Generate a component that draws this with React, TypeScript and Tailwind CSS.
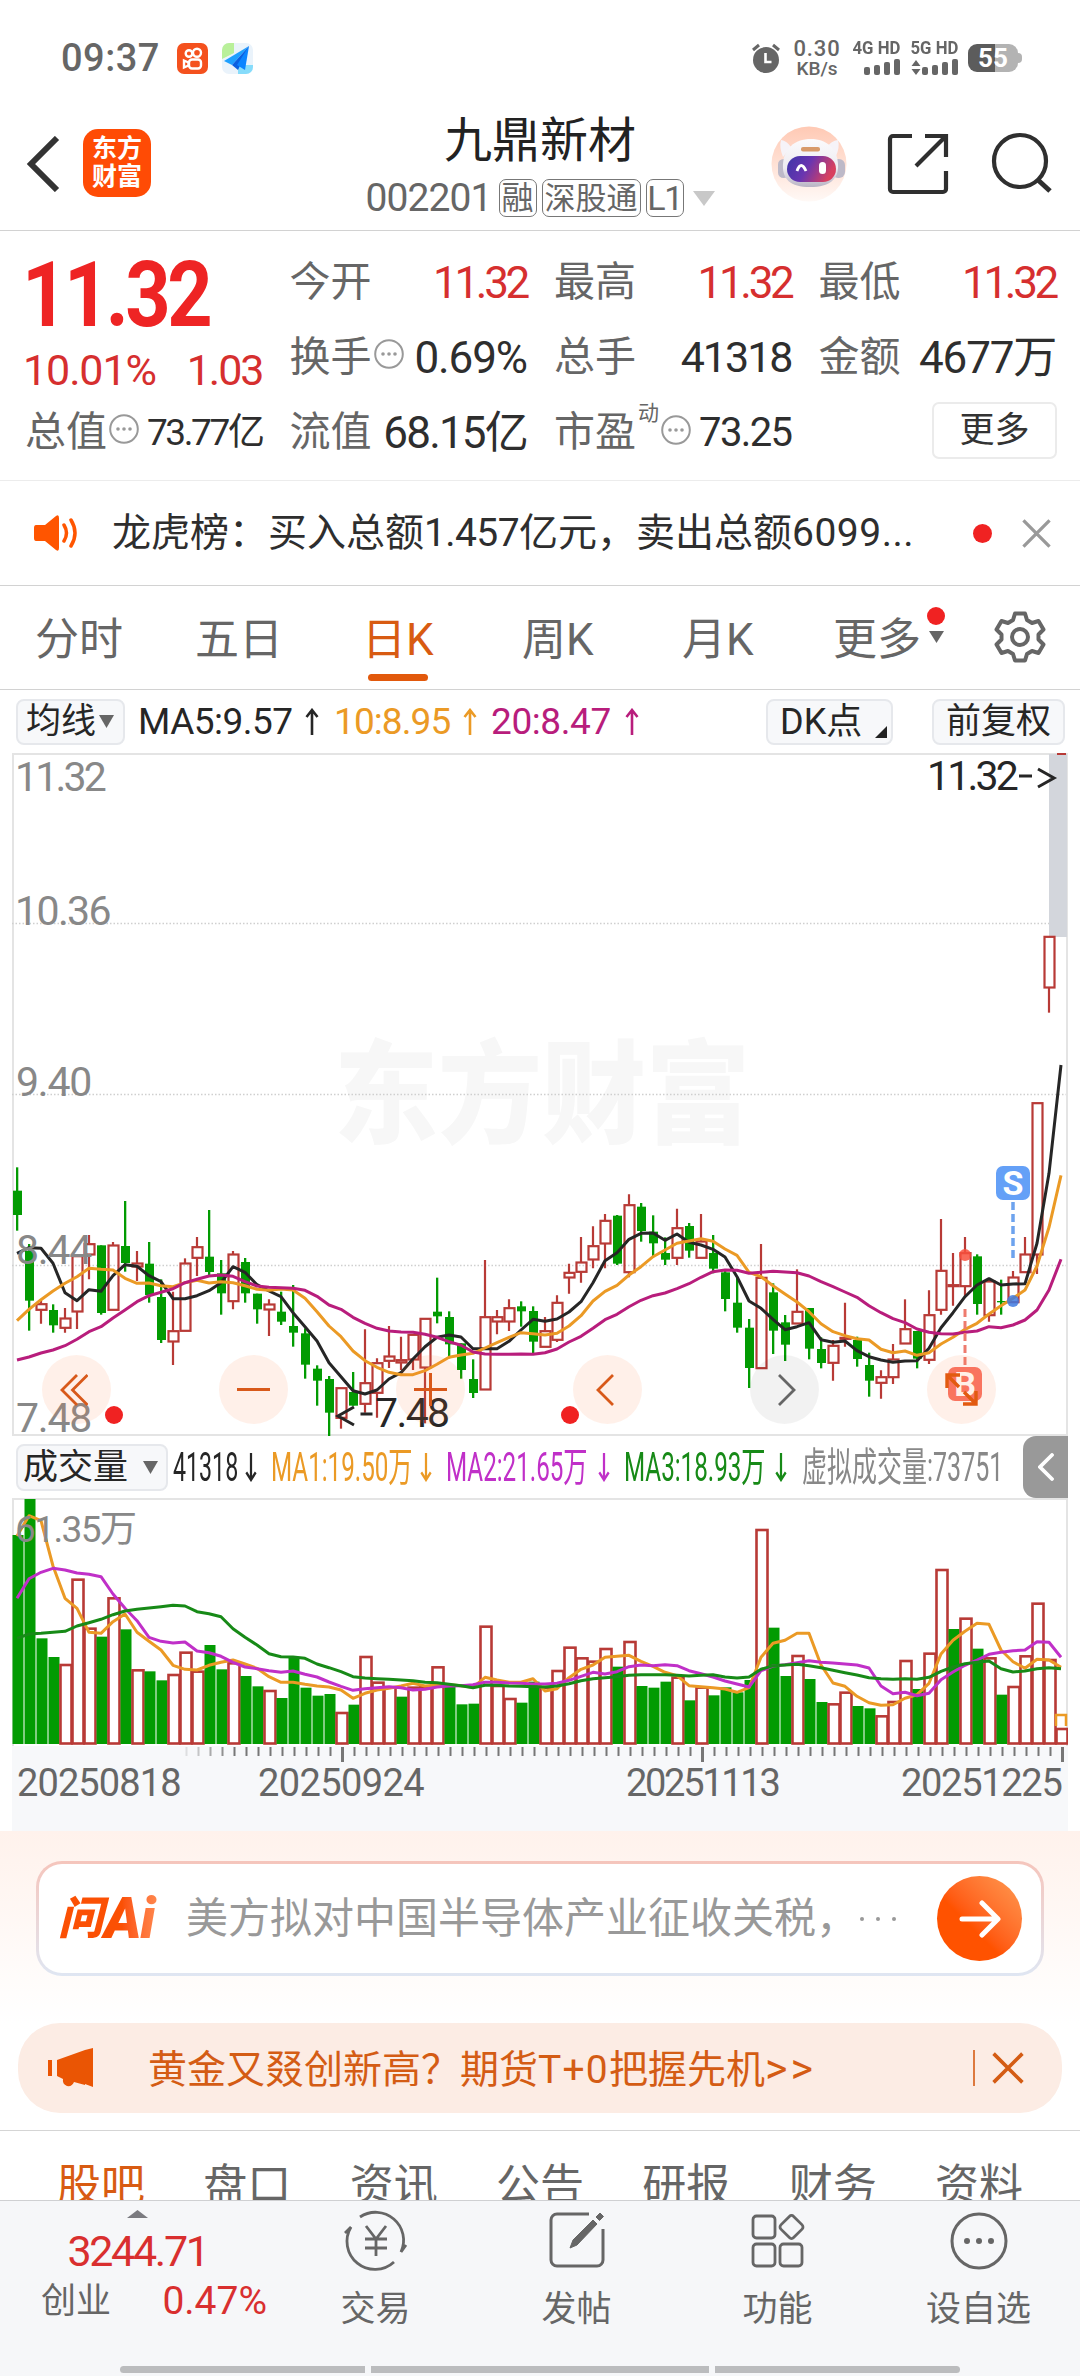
import React from "react";

/* ---------- chart data ---------- */
const STEP = 12;
const FIRST = 5;
const cx = (i: number) => FIRST + i * STEP;

type Candle = [up: 0 | 1, top: number, bottom: number, high: number, low: number];
const candles: Candle[] = [
  [0, 152, 225, 82, 272], [0, 333, 482, 312, 572], [1, 491, 511, 482, 551], [0, 510, 556, 493, 578],
  [1, 534, 565, 504, 578], [1, 347, 516, 347, 567], [1, 311, 345, 285, 418], [0, 316, 519, 316, 524],
  [1, 315, 511, 306, 511], [0, 318, 369, 183, 395], [1, 369, 381, 333, 423], [0, 371, 465, 306, 488],
  [0, 471, 600, 418, 609], [1, 572, 606, 455, 675], [1, 369, 574, 355, 574], [1, 320, 355, 291, 408],
  [0, 350, 396, 210, 410], [0, 400, 460, 360, 524], [1, 342, 485, 333, 508], [0, 366, 460, 354, 488],
  [0, 461, 508, 461, 551], [1, 492, 510, 478, 588], [0, 515, 545, 455, 555], [0, 558, 578, 435, 620],
  [0, 580, 674, 565, 716], [0, 686, 722, 676, 797], [0, 717, 818, 708, 888], [1, 743, 835, 743, 866],
  [0, 756, 797, 696, 797], [1, 728, 793, 568, 818], [1, 668, 760, 655, 833], [1, 648, 664, 558, 684],
  [1, 659, 669, 590, 690], [1, 583, 660, 583, 690], [1, 535, 684, 535, 850], [0, 515, 529, 413, 550],
  [0, 531, 613, 514, 655], [0, 610, 690, 610, 716], [0, 717, 759, 658, 774], [1, 530, 750, 360, 750],
  [1, 530, 546, 510, 583], [1, 503, 546, 478, 573], [0, 499, 514, 484, 560], [0, 513, 605, 499, 643],
  [1, 572, 622, 531, 622], [1, 487, 601, 466, 606], [1, 397, 414, 371, 461], [1, 366, 397, 291, 428],
  [1, 317, 360, 259, 385], [1, 241, 312, 222, 385], [0, 227, 371, 225, 375], [1, 194, 398, 163, 412],
  [0, 200, 273, 189, 305], [0, 275, 310, 226, 350], [0, 339, 359, 292, 375], [1, 263, 355, 206, 375],
  [0, 258, 332, 249, 353], [1, 303, 355, 222, 355], [0, 339, 386, 285, 400], [0, 397, 477, 390, 514],
  [0, 488, 563, 412, 578], [0, 563, 684, 537, 744], [1, 412, 686, 312, 686], [0, 457, 572, 430, 642],
  [0, 547, 614, 525, 663], [1, 514, 552, 388, 552], [0, 504, 626, 504, 658], [0, 627, 669, 592, 685],
  [1, 616, 670, 600, 722], [1, 592, 598, 488, 620], [0, 600, 657, 590, 680], [0, 675, 722, 638, 770],
  [1, 710, 730, 691, 776], [1, 657, 713, 612, 732], [1, 566, 612, 478, 612], [0, 573, 656, 573, 685],
  [1, 524, 661, 451, 672], [1, 391, 511, 237, 524], [1, 434, 440, 339, 497], [1, 338, 440, 291, 470],
  [0, 349, 492, 343, 524], [1, 423, 527, 415, 545], [0, 483, 487, 419, 524], [1, 411, 488, 393, 488],
  [1, 342, 398, 291, 398], [1, -112, 345, -112, 402], [1, -611, -456, -611, -382],
];

const ma5 = [340, 323, 325, 370, 458, 482, 449, 454, 407, 374, 379, 407, 425, 476, 476, 467, 452, 428, 380, 397, 434, 453, 470, 518, 560, 603, 668, 710, 752, 762, 750, 717, 698, 657, 620, 592, 585, 591, 626, 626, 626, 604, 570, 538, 544, 537, 516, 485, 428, 362, 338, 298, 280, 279, 301, 282, 307, 315, 328, 351, 410, 483, 505, 538, 569, 560, 548, 599, 607, 603, 632, 650, 660, 667, 663, 662, 625, 563, 518, 470, 435, 416, 435, 432, 431, 310, 100, -225];
const ma10 = [542, 508, 479, 453, 430, 410, 385, 388, 390, 415, 430, 429, 437, 440, 428, 421, 429, 425, 428, 437, 448, 451, 447, 450, 475, 515, 558, 590, 633, 662, 682, 697, 704, 704, 692, 673, 652, 645, 640, 624, 608, 592, 578, 581, 585, 580, 558, 527, 483, 454, 436, 405, 380, 350, 330, 310, 303, 296, 304, 327, 346, 397, 410, 437, 462, 486, 515, 551, 575, 587, 596, 600, 628, 638, 633, 646, 638, 612, 592, 568, 550, 522, 497, 475, 450, 378, 262, 106];
const ma20 = [660, 651, 639, 630, 617, 598, 575, 560, 534, 510, 485, 467, 457, 446, 428, 418, 408, 405, 409, 425, 438, 442, 443, 445, 451, 469, 495, 508, 532, 550, 565, 573, 576, 577, 583, 592, 605, 616, 636, 642, 643, 643, 642, 643, 638, 627, 606, 589, 565, 539, 523, 500, 481, 467, 459, 446, 431, 412, 395, 390, 391, 400, 397, 394, 396, 398, 408, 425, 440, 456, 472, 497, 518, 536, 548, 567, 577, 581, 582, 577, 573, 560, 563, 555, 540, 510, 450, 358];

/* Positive entries are rising bars, negative ones falling bars. */
const volumes = [-315, -207, -625, -681, 702, 446, 593, -620, 502, -598, 718, -724, -751, 732, 665, 722, -645, -718, 697, -738, -769, 780, -804, -682, -773, -797, -792, 846, -824, 678, 755, 770, -800, 770, 768, 709, -770, -823, -821, 587, 765, 804, -818, -755, 770, 720, 650, 682, 692, 654, -710, 633, -768, -773, -755, 740, -811, 770, -796, -772, -787, -750, 297, -593, -738, 675, -747, -816, 820, 785, -828, -835, 856, 813, 690, -777, 668, 417, -597, 563, -656, 682, -794, 768, 676, 518, 687, 894];
const vma1 = [318, 257, 272, 408, 505, 535, 607, 610, 575, 552, 607, 634, 660, 706, 718, 720, 706, 697, 690, 702, 715, 740, 757, 757, 763, 768, 771, 780, 805, 790, 780, 775, 768, 760, 768, 765, 764, 767, 772, 742, 750, 757, 757, 746, 783, 776, 743, 718, 705, 682, 679, 676, 694, 709, 727, 737, 767, 770, 773, 777, 787, 773, 682, 640, 631, 610, 610, 705, 759, 769, 799, 818, 826, 824, 805, 794, 760, 672, 631, 604, 580, 583, 660, 695, 715, 688, 690, 712];
const vma2 = [505, 446, 427, 415, 420, 429, 433, 440, 492, 535, 572, 622, 634, 639, 636, 663, 668, 679, 697, 711, 716, 722, 727, 723, 733, 741, 756, 769, 781, 776, 773, 770, 773, 780, 778, 771, 768, 767, 764, 757, 757, 759, 760, 762, 762, 760, 751, 739, 727, 732, 725, 710, 705, 707, 704, 707, 722, 731, 741, 753, 762, 771, 722, 708, 704, 698, 692, 697, 699, 702, 705, 714, 768, 791, 787, 797, 790, 749, 726, 706, 690, 673, 667, 662, 660, 635, 637, 682];
const vma3 = [625, 612, 610, 607, 604, 588, 578, 568, 554, 543, 538, 534, 530, 526, 528, 545, 551, 560, 596, 622, 645, 671, 680, 681, 685, 702, 713, 725, 740, 744, 746, 748, 750, 752, 757, 758, 763, 767, 773, 766, 766, 768, 769, 770, 771, 768, 761, 752, 746, 743, 740, 736, 734, 734, 734, 736, 738, 736, 734, 741, 744, 741, 718, 707, 705, 703, 707, 713, 721, 728, 735, 743, 746, 748, 746, 748, 742, 724, 711, 701, 697, 693, 716, 726, 723, 716, 713, 716];

const RED = "#b83a36";
const GREEN = "#029b02";

const py = (v: number) => 387 + v / 3;
const vy = (v: number) => v / 3 - 68;
const path = (vals: number[], y: (v: number) => number) =>
  vals.map((v, i) => `${cx(i)},${y(v).toFixed(1)}`).join(" ");

/* ---------- small icons ---------- */
const Dots = () => (
  <svg className="size-[30px] shrink-0" viewBox="0 0 30 30" fill="none">
    <circle cx="15" cy="15" r="13.8" stroke="#999" strokeWidth="2" />
    <circle cx="9" cy="15" r="1.8" fill="#999" />
    <circle cx="15" cy="15" r="1.8" fill="#999" />
    <circle cx="21" cy="15" r="1.8" fill="#999" />
  </svg>
);

const Arrow = ({ down = false }: { down?: boolean }) => (
  <svg className={down ? "h-[29px] w-[12px] shrink-0 rotate-180" : "h-[27px] w-[14px] shrink-0"} viewBox="0 0 14 27" preserveAspectRatio="none" fill="none" stroke="currentColor" strokeWidth="2.600">
    <path d="M7 27V2M1.5 9L7 2l5.5 7" />
  </svg>
);

const Cross = ({ className }: { className: string }) => (
  <svg className={className} viewBox="0 0 30 30" fill="none" stroke="currentColor" strokeWidth="3.400">
    <path d="M1.5 1.5l27 27M28.5 1.5l-27 27" />
  </svg>
);

const Down = ({ className }: { className: string }) => (
  <svg className={className} viewBox="0 0 16 12" preserveAspectRatio="none" fill="currentColor">
    <path d="M0 0h16L8 12z" />
  </svg>
);

/* ---------- status bar ---------- */
const Signal = () => (
  <svg className="h-[16px] w-[36px]" viewBox="0 0 36 16" fill="#666">
    <rect x="0" y="8" width="6" height="8" rx="2" />
    <rect x="10" y="6" width="6" height="10" rx="2" />
    <rect x="20" y="3" width="6" height="13" rx="2" />
    <rect x="30" y="0" width="6" height="16" rx="2" />
  </svg>
);

function StatusBar() {
  return (
    <div className="flex h-[90px] shrink-0 items-center pt-[26px] pl-[61px] text-[#666]">
      <span className="w-[116px] text-[38px] font-medium tracking-[0.500px]">09:37</span>
      <svg className="size-[31px]" viewBox="0 0 31 31">
        <rect width="31" height="31" rx="7" fill="#f4511e" />
        <g fill="none" stroke="#fff" strokeWidth="2.4">
          <circle cx="12" cy="10.5" r="3.3" />
          <circle cx="20" cy="9.8" r="4" />
          <rect x="12" y="16.5" width="12" height="9" rx="3" />
          <path d="M11.5 19.5L7 17.5v7l4.500-2z" />
        </g>
      </svg>
      <svg className="ml-[14px] size-[31px]" viewBox="0 0 31 31">
        <rect width="31" height="31" rx="7" fill="#eaf3fb" />
        <path d="M0 7a7 7 0 017-7h5v10L0 16z" fill="#b9f09a" />
        <path d="M16 22h15v2a7 7 0 01-7 7h-8z" fill="#86dcfb" />
        <path d="M27 3L2 18l8 4z" fill="#1ea0ff" />
        <path d="M27 3L10 22l6 5z" fill="#0a5fe0" />
        <path d="M27 3l-4 24-8-5z" fill="#0b84ff" />
      </svg>
      <svg className="ml-[498px] h-[30px] w-[30px]" viewBox="0 0 30 30">
        <circle cx="15" cy="17" r="13" fill="#666" />
        <path d="M2 7l6-5M28 7l-6-5" stroke="#666" strokeWidth="3" />
        <path d="M14.500 10v9h6" fill="none" stroke="#fff" strokeWidth="2.600" />
      </svg>
      <div className="ml-[11px] flex w-[50px] flex-col items-center text-center font-medium">
        <span className="h-[20px] text-[22px] leading-[20px] tracking-[0.900px]">0.30</span>
        <span className="h-[19px] text-[19px] leading-[19px]">KB/s</span>
      </div>
      <div className="ml-[10px] flex w-[48px] flex-col items-end font-bold">
        <span className="h-[18px] origin-right scale-x-[0.880] text-[19px] leading-[13px]">4G HD</span>
        <Signal />
      </div>
      <div className="ml-[9px] flex w-[49px] flex-col items-end font-bold">
        <span className="h-[18px] origin-right scale-x-[0.880] text-[19px] leading-[13px]">5G HD</span>
        <div className="flex items-end">
          <svg className="mr-[1px] h-[15px] w-[10px]" viewBox="0 0 10 15" fill="#666"><path d="M5 0l4.500 6h-9zM5 15l4.500-6h-9z" /></svg>
          <Signal />
        </div>
      </div>
      <div className="ml-[10px] flex items-center">
        <div className="flex h-[28px] w-[50px] items-center justify-center rounded-[9px] bg-linear-to-r from-[#5c5c5c] from-55% to-[#b3b3b3] to-55% text-[26px] font-bold text-white">55</div>
        <div className="h-[10px] w-[4px] rounded-r bg-[#b3b3b3]" />
      </div>
    </div>
  );
}

/* ---------- title bar ---------- */
function TitleBar() {
  return (
    <div className="flex h-[141px] shrink-0 items-start border-b border-[#d2d2d2] pl-[26px]">
      <svg className="mt-[46px] h-[56px] w-[34px]" viewBox="0 0 34 56" fill="none" stroke="#333" strokeWidth="6">
        <path d="M31 2L5 28l26 26" />
      </svg>
      <div className="mt-[39px] ml-[23px] flex h-[68px] w-[68px] flex-col items-center justify-center rounded-[15px] bg-[#ff4b05] text-[25px] leading-[28px] font-bold text-white">
        <span>东方</span>
        <span>财富</span>
      </div>
      <div className="ml-[213px] flex w-[352px] flex-col items-center pt-[27px]">
        <span className="text-[48px] text-[#222]">九鼎新材</span>
        <div className="mt-[14px] flex h-[38px] items-center text-[#666]">
          <span className="mr-[7px] text-[39px] tracking-[-0.900px]">002201</span>
          <span className="flex h-[38px] items-center rounded-[7px] border-[1.500px] border-[#777] px-[2px] text-[32px]">融</span>
          <span className="ml-[5px] flex h-[38px] items-center rounded-[7px] border-[1.500px] border-[#777] px-[2px] text-[31px]">深股通</span>
          <span className="ml-[5px] flex h-[38px] w-[38px] items-center justify-center rounded-[7px] border-[1.500px] border-[#777] text-[34px] tracking-[-1.500px]">L1</span>
          <Down className="ml-[9px] h-[15px] w-[22px] text-[#c8c8c8]" />
        </div>
      </div>
      <svg className="mt-[35px] ml-[54px] size-[78px]" viewBox="0 0 78 78">
        <defs>
          <linearGradient id="halo" x1="0" y1="0" x2="0" y2="1"><stop offset="0" stopColor="#ffc9b4" /><stop offset="1" stopColor="#fff9f6" /></linearGradient>
          <linearGradient id="shell" x1="0" y1="0" x2="0" y2="1"><stop offset="0" stopColor="#fbfafc" /><stop offset="0.600" stopColor="#eeecf1" /><stop offset="1" stopColor="#b9b4c4" /></linearGradient>
          <linearGradient id="visor" x1="0" y1="0" x2="1" y2="0.300"><stop offset="0" stopColor="#3d36a8" /><stop offset="0.500" stopColor="#6a35b0" /><stop offset="1" stopColor="#d8405f" /></linearGradient>
        </defs>
        <circle cx="39" cy="39" r="37.500" fill="url(#halo)" />
        <path d="M11 15q6 1 10 7l-8 10q-4-10-2-17zM68 15q-7 1-11 7l9 9q4-9 2-16z" fill="#f6f3f8" />
        <rect x="8" y="34" width="11" height="19" rx="5.500" fill="#bdb9c8" />
        <rect x="62" y="34" width="13" height="19" rx="6" fill="#bdb9c8" />
        <path d="M41 14c16 0 26 10 27 25s-8 23-28 23-28-8-27-23 11-25 28-25z" fill="url(#shell)" />
        <rect x="31" y="22" width="19" height="4.500" rx="2" fill="#d89a6a" />
        <rect x="17" y="31" width="49" height="26" rx="13" fill="url(#visor)" />
        <path d="M27 46q4-11 9 0" fill="none" stroke="#fff" strokeWidth="2.800" />
        <rect x="49" y="37" width="7" height="12" rx="3.500" fill="#fff" />
      </svg>
      <svg className="mt-[43px] ml-[39px] size-[62px]" viewBox="0 0 62 62" fill="none" stroke="#2f2f2f" strokeWidth="4.200">
        <path d="M25 3H6a3 3 0 00-3 3v50a3 3 0 003 3h50a3 3 0 003-3V38M29 33L58 4M38 3h21v21" />
      </svg>
      <svg className="mt-[42px] ml-[42px] size-[62px]" viewBox="0 0 62 62" fill="none" stroke="#2f2f2f" strokeWidth="4.200">
        <circle cx="29" cy="29" r="26" />
        <path d="M47 48l12 11" strokeWidth="5" />
      </svg>
    </div>
  );
}

/* ---------- quote ---------- */
type FieldProps = { label: string; value: string; dots?: boolean; sup?: string; tone?: string };

function Field({ label, dots, sup, value, tone = "text-[43px] tracking-[-2px] text-[#2e2e2e]" }: FieldProps) {
  return (
    <div className="flex items-center justify-between">
      <span className="flex items-center text-[41px] text-[#666]">
        {label}
        {sup && <span className="mb-[38px] ml-[2px] text-[21px]">{sup}</span>}
        {dots && <span className={sup ? "mb-[6px] ml-[2px]" : "mb-[8px] ml-[2px]"}><Dots /></span>}
      </span>
      <span className={tone}>{value}</span>
    </div>
  );
}

const priceTone = "text-[44px] tracking-[-3.300px] text-[#d62f2f]";

function Quote() {
  return (
    <div className="grid h-[250px] shrink-0 auto-rows-[75px] grid-cols-4 gap-x-[27px] border-b border-[#ececec] pt-[14px] pr-[24px] pl-[25px]">
      <div className="row-span-2 flex flex-col text-[#d62f2f]">
        <div className="ml-[-3px] flex h-[104px] origin-left scale-x-[0.880] items-center text-[90px] font-bold tracking-[-4px] text-[#ee2424]">11.32</div>
        <div className="flex h-[50px] items-center justify-between text-[43px] tracking-[-2px]">
          <span className="ml-[-2px] tracking-[-1.100px]">10.01%</span>
          <span>1.03</span>
        </div>
      </div>
      <Field label="今开" value="11.32" tone={priceTone} />
      <Field label="最高" value="11.32" tone={priceTone} />
      <Field label="最低" value="11.32" tone={priceTone} />
      <Field label="换手" value="0.69%" dots tone="text-[44px] tracking-[-1.100px] text-[#2e2e2e]" />
      <Field label="总手" value="41318" />
      <Field label="金额" value="4677万" tone="text-[44px] tracking-[-1.200px] text-[#2e2e2e]" />
      <Field label="总值" value="73.77亿" dots tone="text-[37px] tracking-[-2.400px] text-[#2e2e2e]" />
      <Field label="流值" value="68.15亿" tone="text-[44px] tracking-[-1.800px] text-[#2e2e2e]" />
      <Field label="市盈" value="73.25" sup="动" dots tone="text-[40px] tracking-[-1.600px] text-[#2e2e2e]" />
      <div className="flex items-center justify-end">
        <div className="mr-[-1px] mb-[4px] flex h-[57px] w-[125px] items-center justify-center rounded-[7px] border-2 border-[#ebebeb] text-[35px] text-[#333]">更多</div>
      </div>
    </div>
  );
}

function Notice() {
  return (
    <div className="flex h-[105px] shrink-0 items-center border-b border-[#d2d2d2] pl-[33px]">
      <svg className="h-[38px] w-[46px]" viewBox="0 0 46 38">
        <path d="M3 11h9L23 2q3-2 3 2v30q0 4-3 2l-11-9H3q-2 0-2-3V14q0-3 2-3z" fill="#ff5500" />
        <path d="M31 11q5 8 0 16M38 6q8 13 0 26" fill="none" stroke="#ff5500" strokeWidth="3.500" strokeLinecap="round" />
      </svg>
      <span className="ml-[33px] w-[861px] pt-[1px] text-[39px] text-[#2e2e2e]">龙虎榜：买入总额<span className="tracking-[-0.600px]">1.457</span>亿元，卖出总额<span className="tracking-[0.500px]">6099...</span></span>
      <span className="size-[19px] rounded-full bg-[#f02222]" />
      <Cross className="ml-[30px] size-[29px] text-[#999]" />
    </div>
  );
}

/* ---------- period tabs ---------- */
function PeriodTabs() {
  return (
    <div className="flex h-[104px] shrink-0 items-center border-b border-[#d2d2d2] pt-[5px] pl-[35px] text-[44px] text-[#666]">
      <span className="w-[160px]">分时</span>
      <span className="w-[167px]">五日</span>
      <span className="relative w-[160px] text-[#d85b12]">
        日K
        <span className="absolute top-[56px] left-[6px] h-[7px] w-[60px] rounded-full bg-[#e2590c]" />
      </span>
      <span className="w-[160px]">周K</span>
      <span className="w-[151px]">月K</span>
      <span className="relative w-[161px]">
        更多
        <Down className="absolute top-[13px] left-[96px] h-[12px] w-[15px]" />
        <span className="absolute top-[-11px] left-[94px] size-[18px] rounded-full bg-[#f02222]" />
      </span>
      <svg className="mb-[6px] size-[52px]" viewBox="0 0 52 52" fill="none" stroke="#666" strokeWidth="4" strokeLinejoin="round">
        <path d="M21 2.500h10l2 6.500 5 3 6.500-2 5 8.500-5 5v5l5 5-5 8.500-6.500-2-5 3-2 6.500H21l-2-6.500-5-3-6.500 2-5-8.500 5-5v-5l-5-5L7.500 10l6.500 2 5-3z" />
        <circle cx="26" cy="26" r="8" />
      </svg>
    </div>
  );
}

const chip = "flex items-center rounded-[8px] border-2 border-[#e6e8ec] bg-[#f7f8fa] text-[#262626]";

function MaRow() {
  return (
    <div className="flex h-[63px] shrink-0 items-center pr-[15px] pl-[16px] text-[37px]">
      <div className={`${chip} h-[46px] w-[109px] pl-[8px] text-[35px]`}>
        均线
        <Down className="ml-[3px] h-[13px] w-[15px] text-[#666]" />
      </div>
      <span className="ml-[13px] flex w-[196px] items-center text-[#262626]"><span className="w-[167px] tracking-[-0.500px]">MA5:9.57</span><Arrow /></span>
      <span className="flex w-[157px] items-center text-[#eb9a25]"><span className="w-[129px] tracking-[-0.900px]">10:8.95</span><Arrow /></span>
      <span className="flex w-[275px] items-center text-[#b81d7c]"><span className="w-[134px] tracking-[-0.400px]">20:8.47</span><Arrow /></span>
      <div className={`${chip} relative h-[46px] w-[127px] pl-[12px] text-[36px]`}>
        DK点
        <svg className="absolute right-[4px] bottom-[5px] size-[12px]" viewBox="0 0 12 12"><path d="M12 0v12H0z" fill="#222" /></svg>
      </div>
      <div className={`${chip} ml-auto h-[46px] w-[133px] justify-center text-[35px]`}>前复权</div>
    </div>
  );
}

/* ---------- price chart ---------- */
const bubble = "flex size-[69px] items-center justify-center rounded-full bg-[#ff7a33]/11";

function PriceChart() {
  return (
    <div className="relative mx-[12px] h-[683px] shrink-0 border-2 border-[#e4e4e4]">
      <div className="absolute top-[290px] left-[320px] scale-y-[1.080] text-[104px] font-black text-[#f7f7f7]">东方财富</div>
      <svg className="absolute -top-[2px] -left-[2px] h-[690px] w-[1056px]" viewBox="0 0 1056 690">
        <g stroke="#cfcfcf" strokeWidth="1.500" strokeDasharray="1.500 2">
          <path d="M0 170.500h1054M0 341.500h1054M0 512.500h1054" />
        </g>
        <rect x="1037" y="1" width="18" height="183" fill="#d3d6dc" />
        <rect x="1045" y="0" width="9" height="2" fill={RED} />
        {candles.map(([up, top, bottom, high, low], i) => {
          const x = cx(i);
          const y0 = py(top);
          const y1 = py(bottom);
          return up ? (
            <g key={i} fill="none" stroke={RED} strokeWidth="2.200">
              <path d={`M${x} ${py(high)}V${y0}M${x} ${y1}V${py(low)}`} />
              <rect x={x - 4.500} y={y0 + 0.500} width="10" height={Math.max(y1 - y0 - 1, 1)} />
            </g>
          ) : (
            <g key={i} fill={GREEN}>
              <rect x={x - 1} y={py(high)} width="2.300" height={py(low) - py(high)} />
              <rect x={x - 4} y={y0} width="9" height={y1 - y0} />
            </g>
          );
        })}
        <g fill="none" strokeWidth="3" strokeLinejoin="round">
          <polyline points={path(ma5, py)} stroke="#262626" />
          <polyline points={path(ma10, py)} stroke="#eb9a25" />
          <polyline points={path(ma20, py)} stroke="#b81d7c" />
        </g>
        <path d="M1001 449v58" stroke="#6da3ee" strokeWidth="3.500" strokeDasharray="8 4" />
        <path d="M953 556v57" stroke="#ee7b6e" strokeWidth="3" strokeDasharray="8 4" />
        <circle cx="1001" cy="548" r="6" fill="#3f7ae0" fillOpacity="0.850" />
        <circle cx="953" cy="502" r="6" fill="#f8503c" fillOpacity="0.850" />
        <g fill="none" stroke="#262626" strokeWidth="3">
          <path d="M342 654l-16 9 16 9M348.500 661h12" />
          <path d="M1026 16l16 9-16 9M1007 23h13" />
        </g>
      </svg>
      <span className="absolute top-[411px] left-[982px] flex size-[34px] items-center justify-center rounded-[7px] bg-[#64a0f7] text-[34px] font-bold text-white">S</span>
      <span className="absolute top-[612px] left-[934px] flex size-[34px] items-center justify-center rounded-[7px] bg-[#f97465] text-[34px] font-bold text-white">B</span>
      <div className="text-[41px] tracking-[-1.200px] text-[#888]">
        <span className="absolute top-[2px] left-[1px] tracking-[-2.800px]">11.32</span>
        <span className="absolute top-[136px] left-[1px] tracking-[-1.600px]">10.36</span>
        <span className="absolute top-[307px] left-[2px]">9.40</span>
        <span className="absolute top-[475px] left-[2px]">8.44</span>
        <span className="absolute top-[643px] left-[2px]">7.48</span>
      </div>
      <span className="absolute top-[1px] left-[913px] text-[41px] tracking-[-2.800px] text-[#262626]">11.32</span>
      <span className="absolute top-[638px] left-[361px] text-[41px] tracking-[-1.600px] text-[#262626]">7.48</span>
      <div className="absolute top-[600px] left-[28px] flex gap-[108px]">
        <span className={bubble}>
          <svg className="mr-[6px] h-[32px] w-[28px]" viewBox="0 0 28 32" fill="none" stroke="#d8591a" strokeWidth="2.800"><path d="M17 1L2 16l15 15M27.500 1l-15 15 15 15" /></svg>
        </span>
        <span className={bubble}><span className="h-[3px] w-[33px] bg-[#d8591a]" /></span>
        <span className={bubble}>
          <svg className="size-[33px]" viewBox="0 0 33 33" stroke="#d8591a" strokeWidth="3"><path d="M0 16.500h33M16.500 0v33" /></svg>
        </span>
        <span className={bubble}>
          <svg className="mr-[5px] h-[32px] w-[18px]" viewBox="0 0 18 32" fill="none" stroke="#d8591a" strokeWidth="2.800"><path d="M17 1L2 16l15 15" /></svg>
        </span>
        <span className="flex size-[69px] items-center justify-center rounded-full bg-black/5">
          <svg className="ml-[5px] h-[32px] w-[18px]" viewBox="0 0 18 32" fill="none" stroke="#666" strokeWidth="2.800"><path d="M1 1l15 15L1 31" /></svg>
        </span>
        <span className={bubble}>
          <svg className="size-[33px]" viewBox="0 0 33 33" fill="none" stroke="#e25a10" strokeWidth="3.400"><path d="M14 14L2 2M2 15V2h13M19 19l12 12M31 18v13H18" /></svg>
        </span>
      </div>
      <span className="absolute top-[651px] left-[91px] size-[18px] rounded-full bg-[#f02222]" />
      <span className="absolute top-[651px] left-[547px] size-[18px] rounded-full bg-[#f02222]" />
    </div>
  );
}

/* ---------- volume ---------- */
const squeeze = "block origin-left scale-x-[0.605] text-[40px] leading-none pt-[2px]";

function VolumeHeader() {
  return (
    <div className="mr-[12px] flex h-[62px] shrink-0 items-center pl-[16px]">
      <div className={`${chip} h-[47px] w-[152px] justify-between pr-[8px] pl-[5px] text-[35px]`}>
        成交量
        <Down className="h-[13px] w-[15px] text-[#666]" />
      </div>
      <div className="ml-[5px] flex w-[98px] items-center text-[#262626]"><span className="w-[72px]"><span className="block origin-left scale-x-[0.580] pt-[2px] text-[40px] leading-none">41318</span></span><Arrow down /></div>
      <div className="flex w-[175px] items-center text-[#eb9a25]"><span className="w-[149px]"><span className={squeeze}>MA1:19.50万</span></span><Arrow down /></div>
      <div className="flex w-[178px] items-center text-[#c030c8]"><span className="w-[152px]"><span className={squeeze}>MA2:21.65万</span></span><Arrow down /></div>
      <div className="flex w-[178px] items-center text-[#178a17]"><span className="w-[151px]"><span className={squeeze}>MA3:18.93万</span></span><Arrow down /></div>
      <div className="w-[221px] text-[#888]"><span className="block origin-left scale-x-[0.625] pt-[2px] text-[40px] leading-none">虚拟成交量:73751</span></div>
      <div className="flex h-[62px] w-[45px] items-center justify-center rounded-l-[13px] bg-[#999]">
        <svg className="h-[28px] w-[16px]" viewBox="0 0 16 28" fill="none" stroke="#fff" strokeWidth="3.800" strokeLinecap="round"><path d="M14 2L2 14l12 12" /></svg>
      </div>
    </div>
  );
}

function VolumeChart() {
  return (
    <div className="relative mx-[12px] h-[248px] shrink-0 border-2 border-b-0 border-[#e4e4e4]">
      <svg className="absolute -top-[2px] -left-[2px] h-[248px] w-[1056px]" viewBox="0 0 1056 248">
        {volumes.map((v, i) => {
          const x = cx(i);
          const y = vy(Math.abs(v));
          return v < 0 ? (
            <rect key={i} x={x - 4.500} y={y} width="11" height={246 - y} fill={GREEN} />
          ) : (
            <rect key={i} x={x - 4.500} y={y + 1} width="11" height={244.500 - y} fill="#fff" stroke={RED} strokeWidth="2.600" />
          );
        })}
        <path d="M1044 228v-11h10v11" fill="none" stroke="#eb9a25" strokeWidth="2.500" />
        <g fill="none" strokeWidth="3" strokeLinejoin="round">
          <polyline points={path(vma1, vy)} stroke="#eb9a25" />
          <polyline points={path(vma2, vy)} stroke="#c030c8" />
          <polyline points={path(vma3, vy)} stroke="#178a17" />
        </g>
      </svg>
      <span className="absolute top-[11px] left-[1px] text-[37px] tracking-[-1.600px] text-[#888]">61.35万</span>
    </div>
  );
}

function Dates() {
  return (
    <div className="mx-[12px] flex h-[85px] shrink-0 flex-col bg-[#f7f8fa] text-[#666]">
      <svg className="h-[18px] w-[1056px]" viewBox="0 0 1056 18">
        {Array.from({ length: 74 }, (_, k) => {
          const major = k === 13 || k === 43 || k === 73;
          return <rect key={k} x={major ? 173 + k * STEP : 173.500 + k * STEP} y="1" width={major ? 3 : 2} height={major ? 15 : 9} fill="#777" opacity={Math.min(1, (k + 1) / 5)} />;
        })}
      </svg>
      <div className="flex text-[38px] tracking-[-0.900px]">
        <span className="w-[240px] pl-[5px]">20250818</span>
        <span className="w-[369px] pl-[6px] tracking-[-0.600px]">20250924</span>
        <span className="w-[280px] pl-[5px] tracking-[-2.300px]">20251113</span>
        <span className="tracking-[-1.300px]">20251225</span>
      </div>
    </div>
  );
}

/* ---------- promo blocks ---------- */
function AskAi() {
  return (
    <div className="h-[192px] shrink-0 bg-linear-to-b from-[#fff2ec] to-white px-[36px] pt-[30px]">
      <div className="h-[115px] rounded-[26px] bg-linear-to-b from-[#f5c5bc] to-[#dfe6f2] p-[3px]">
        <div className="flex h-full items-center rounded-[23px] bg-white pl-[19px]">
          <span className="flex h-[60px] w-[128px] items-center bg-linear-to-r from-[#fb5004] from-50% to-[#ff8a50] to-80% bg-clip-text font-black text-transparent italic">
            <span className="w-[46px] text-[45px] tracking-[-2px]">问</span>
            <span className="text-[57px] tracking-[-1.500px]">Ai</span>
          </span>
          <span className="w-[674px] text-[42px] text-[#999]">美方拟对中国半导体产业征收关税，</span>
          <span className="flex w-[77px] gap-[12px]">
            <i className="size-[4px] rounded-full bg-[#999]" />
            <i className="size-[4px] rounded-full bg-[#999]" />
            <i className="size-[4px] rounded-full bg-[#999]" />
          </span>
          <span className="flex size-[85px] items-center justify-center rounded-full bg-linear-to-tr from-[#ff5200] from-40% to-[#ff9a50]">
            <svg className="h-[38px] w-[42px]" viewBox="0 0 42 38" fill="none" stroke="#fff" strokeWidth="5" strokeLinecap="round" strokeLinejoin="round"><path d="M3 19h35M23 3l16 16-16 16" /></svg>
          </span>
        </div>
      </div>
    </div>
  );
}

function Banner() {
  return (
    <div className="mx-[18px] flex h-[90px] shrink-0 items-center rounded-[42px] bg-[#fcece4] pl-[30px] text-[#d45c14]">
      <svg className="h-[40px] w-[46px]" viewBox="0 0 46 40" fill="#ea5504">
        <rect x="0" y="12" width="4" height="16" />
        <path d="M9 12L37 2l8-2v39l-8-3v1L26 34q-2 5-7 4-5-2-4-7l-6-3z" />
      </svg>
      <span className="ml-[54px] text-[39px]">黄金又叕创新高？期货<span className="tracking-[1.200px]">T+0</span>把握先机<span className="text-[43px] tracking-[3px]">&gt;&gt;</span></span>
      <span className="mr-[17px] ml-auto h-[36px] w-[2px] bg-[#d45c14]/80" />
      <Cross className="mr-[38px] size-[32px]" />
    </div>
  );
}

function InfoTabs() {
  return (
    <div className="mt-[17px] flex h-[70px] shrink-0 justify-between overflow-hidden border-t border-[#d5d5d5] px-[57px] pt-[33px] text-[44px] leading-none text-[#666]">
      {["股吧", "盘口", "资讯", "公告", "研报", "财务", "资料"].map((t, i) => (
        <span key={t} className={i === 0 ? "text-[#d85b12]" : ""}>{t}</span>
      ))}
    </div>
  );
}

/* ---------- bottom bar ---------- */
const navIcon = "size-[64px]";
const navItem = "flex w-[201px] flex-col items-center gap-[20px] pt-[7px]";

function BottomBar() {
  return (
    <div className="flex h-[176px] shrink-0 flex-col border-t border-[#cfd0d2] bg-[#f6f7f9] text-[#666]">
      <div className="flex h-[165px]">
        <div className="flex w-[275px] flex-col items-center pt-[9px]">
          <svg className="h-[8px] w-[21px]" viewBox="0 0 21 8"><path d="M10.500 0L21 8H0z" fill="#7b7b80" /></svg>
          <span className="mt-[12px] text-[43px] tracking-[-2.300px] text-[#d92f2f]">3244.71</span>
          <div className="mt-[9px] flex w-full items-center justify-between pr-[8px] pl-[41px] text-[35px]">
            <span>创业</span>
            <span className="text-[39px] text-[#d92f2f]">0.47%</span>
          </div>
        </div>
        <div className={navItem}>
          <svg className={navIcon} viewBox="0 0 64 64" fill="none" stroke="#666" strokeWidth="2.800">
            <path d="M16 9A28 28 0 0157 44l5-7M50 54A28 28 0 017 19l-6 6" />
            <path d="M22 18l10 13 10-13M21 31h22M21 40h22M32 31v17" />
          </svg>
          <span className="text-[35px]">交易</span>
        </div>
        <div className={navItem}>
          <svg className={navIcon} viewBox="0 0 64 64" fill="none" stroke="#666" strokeWidth="3">
            <path d="M44 6H12a6 6 0 00-6 6v40a6 6 0 006 6h40a6 6 0 006-6V21" />
            <path d="M25 40l3-8 20-20 4 4-20 21zM51 9l4-4 3.500 3.500-4 4z" fill="#666" strokeWidth="1" />
          </svg>
          <span className="text-[35px]">发帖</span>
        </div>
        <div className={navItem}>
          <svg className={navIcon} viewBox="0 0 64 64" fill="none" stroke="#666" strokeWidth="2.800">
            <rect x="7" y="8" width="22" height="22" rx="3.500" />
            <rect x="7" y="36" width="22" height="22" rx="3.500" />
            <rect x="34" y="36" width="22" height="22" rx="3.500" />
            <rect x="36.500" y="10" width="18" height="18" rx="3" transform="rotate(45 45.500 19)" />
          </svg>
          <span className="text-[35px]">功能</span>
        </div>
        <div className={navItem}>
          <svg className={navIcon} viewBox="0 0 64 64" fill="none" stroke="#666" strokeWidth="3">
            <circle cx="32" cy="33" r="27" />
            <g fill="#666" stroke="none"><circle cx="20" cy="33" r="3" /><circle cx="32" cy="33" r="3" /><circle cx="44" cy="33" r="3" /></g>
          </svg>
          <span className="text-[35px]">设自选</span>
        </div>
      </div>
      <div className="flex gap-[6px] px-[120px]">
        <span className="h-[7px] w-[245px] rounded-l-full bg-[#bbbcbe]" />
        <span className="h-[7px] w-[338px] bg-[#bbbcbe]" />
        <span className="h-[7px] w-[245px] rounded-r-full bg-[#bbbcbe]" />
      </div>
    </div>
  );
}

export default function App() {
  return (
    <div className="flex h-[2376px] w-[1080px] flex-col overflow-hidden bg-white font-['Roboto','Noto_Sans_CJK_SC',sans-serif] leading-none whitespace-nowrap">
      <StatusBar />
      <TitleBar />
      <Quote />
      <Notice />
      <PeriodTabs />
      <MaRow />
      <PriceChart />
      <VolumeHeader />
      <VolumeChart />
      <Dates />
      <AskAi />
      <Banner />
      <InfoTabs />
      <BottomBar />
    </div>
  );
}
